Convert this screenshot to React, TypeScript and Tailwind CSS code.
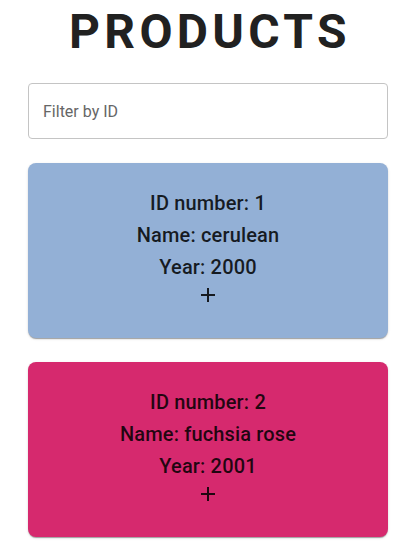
import { useState } from "react";

interface Product {
  id: number;
  name: string;
  year: number;
  color: string;
}

const products: Product[] = [
  { id: 1, name: "cerulean", year: 2000, color: "#93b0d6" },
  { id: 2, name: "fuchsia rose", year: 2001, color: "#d6296e" },
];

function AddIcon() {
  return (
    <svg width="24" height="24" viewBox="0 0 24 24" className="fill-current">
      <path d="M19 13h-6v6h-2v-6H5v-2h6V5h2v6h6v2z" />
    </svg>
  );
}

export default function App() {
  const [filter, setFilter] = useState("");

  const shown = products.filter((p) => !filter || String(p.id) === filter);

  return (
    <main className="min-h-screen bg-white font-['Roboto',_'Liberation_Sans',_sans-serif]">
      {/* Header */}
      <h1 className="pt-[4px] text-center text-[48px] leading-[56px] font-bold tracking-[0.09em] text-[#212121]">
        PRODUCTS
      </h1>

      {/* Filter */}
      <div className="ml-[28px] mt-[23px] w-[360px]">
        <input
          value={filter}
          onChange={(e) => setFilter(e.target.value)}
          placeholder="Filter by ID"
          className="h-[56px] w-full rounded-[4px] border border-[#c4c4c4] px-[14px] text-[16px] text-[#212121] outline-none placeholder:text-[#666666]"
        />
      </div>

      {/* Cards */}
      <div className="ml-[28px] mt-[24px] flex w-[360px] flex-col gap-[24px]">
        {shown.map((p) => (
          <div
            key={p.id}
            className="flex h-[175px] flex-col items-center rounded-[8px] pt-[24px] text-[20px] leading-[32px] font-medium tracking-[0.0075em] text-black/85 shadow-[0_2px_1px_-1px_rgba(0,0,0,0.2),0_1px_1px_0_rgba(0,0,0,0.14),0_1px_3px_0_rgba(0,0,0,0.12)]"
            style={{ backgroundColor: p.color }}
          >
            <p>ID number: {p.id}</p>
            <p>Name: {p.name}</p>
            <p>Year: {p.year}</p>
            <AddIcon />
          </div>
        ))}
      </div>
    </main>
  );
}
